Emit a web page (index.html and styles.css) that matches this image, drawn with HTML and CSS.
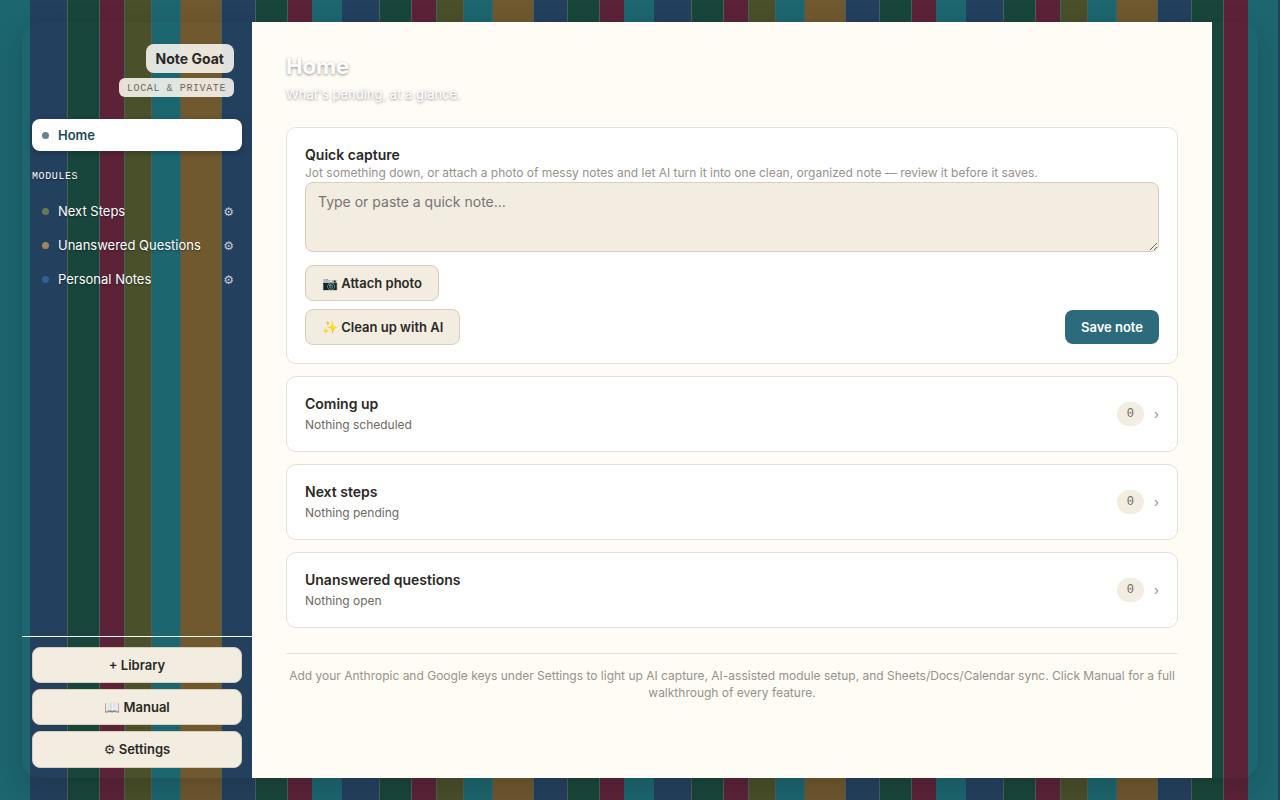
FILE: index.html
```html
<!DOCTYPE html>
<html lang="en">
<head>
<meta charset="utf-8">
<meta name="viewport" content="width=device-width, initial-scale=1">
<title>Note Goat</title>
<link rel="stylesheet" href="styles.css">
</head>
<body>
<div class="shell">
  <aside class="sidebar">
    <div class="brand">
      <span class="brand-name">Note Goat</span>
      <span class="brand-tag">LOCAL &amp; PRIVATE</span>
    </div>
    <nav class="nav">
      <a class="nav-link active" href="#home"><span class="dot"></span>Home</a>
      <h2 class="nav-heading">MODULES</h2>
      <div class="nav-row">
        <a class="nav-link" href="#next"><span class="dot dot-olive"></span>Next Steps</a>
        <button class="gear" type="button" aria-label="Configure Next Steps">⚙</button>
      </div>
      <div class="nav-row">
        <a class="nav-link" href="#questions"><span class="dot dot-tan"></span>Unanswered Questions</a>
        <button class="gear" type="button" aria-label="Configure Unanswered Questions">⚙</button>
      </div>
      <div class="nav-row">
        <a class="nav-link" href="#notes"><span class="dot dot-blue"></span>Personal Notes</a>
        <button class="gear" type="button" aria-label="Configure Personal Notes">⚙</button>
      </div>
    </nav>
    <div class="side-actions">
      <button class="btn" type="button">+ Library</button>
      <button class="btn" type="button">📖 Manual</button>
      <button class="btn" type="button"><span class="symbol">⚙</span> Settings</button>
    </div>
  </aside>
  <main class="main">
    <header class="page-head">
      <h1>Home</h1>
      <p>What's pending, at a glance.</p>
    </header>
    <section class="card">
      <label class="card-title" for="note">Quick capture</label>
      <p class="hint">Jot something down, or attach a photo of messy notes and let AI turn it into one clean, organized note — review it before it saves.</p>
      <textarea id="note" class="note" placeholder="Type or paste a quick note..."></textarea>
      <button class="btn" type="button">📷 Attach photo</button>
      <div class="actions">
        <button class="btn" type="button">✨ Clean up with AI</button>
        <button class="btn btn-primary" type="button">Save note</button>
      </div>
    </section>
    <a class="card summary" href="#coming">
      <span class="summary-text"><span class="card-title">Coming up</span><span class="status">Nothing scheduled</span></span>
      <span class="count">0</span><span class="chevron">›</span>
    </a>
    <a class="card summary" href="#next">
      <span class="summary-text"><span class="card-title">Next steps</span><span class="status">Nothing pending</span></span>
      <span class="count">0</span><span class="chevron">›</span>
    </a>
    <a class="card summary" href="#questions">
      <span class="summary-text"><span class="card-title">Unanswered questions</span><span class="status">Nothing open</span></span>
      <span class="count">0</span><span class="chevron">›</span>
    </a>
    <footer class="foot">Add your Anthropic and Google keys under Settings to light up AI capture, AI-assisted module setup, and Sheets/Docs/Calendar sync. Click Manual for a full walkthrough of every feature.</footer>
  </main>
</div>
</body>
</html>
```
FILE: styles.css
```css
:root {
  --teal: #1c6670;
  --navy: #24405f;
  --green: #19463c;
  --maroon: #5c2338;
  --olive: #49502a;
  --brown: #70582f;
  --seam: #49605c;
  --sand: #f3ece0;
  --sand-line: #d9cfb8;
  --line: #e6e2d8;
  --ink: #2a2926;
}

* { box-sizing: border-box; }

body {
  margin: 0;
  min-height: 100vh;
  padding: 22px;
  display: flex;
  font-family: Inter, "Liberation Sans", sans-serif;
  font-size: 14px;
  color: var(--ink);
  background: repeating-linear-gradient(90deg,
    var(--teal) 0 30px,
    var(--navy) 30px 67px, var(--seam) 67px 68px,
    var(--green) 68px 99px, var(--seam) 99px 100px,
    var(--maroon) 100px 124px, var(--seam) 124px 125px,
    var(--olive) 125px 151px, var(--seam) 151px 152px,
    var(--teal) 152px 180px, var(--seam) 180px 181px,
    var(--brown) 181px 221px, var(--seam) 221px 222px,
    var(--navy) 222px 255px, var(--seam) 255px 256px,
    var(--green) 256px 287px, var(--seam) 287px 288px,
    var(--maroon) 288px 312px);
}

h1, h2, p { margin: 0; }
a { color: inherit; text-decoration: none; }
button { font: inherit; cursor: pointer; }

.shell {
  flex: 1;
  display: flex;
  border-radius: 18px;
  box-shadow: 0 10px 30px rgba(20, 20, 20, .2);
}

.sidebar {
  flex: 0 0 230px;
  display: flex;
  flex-direction: column;
}

.brand {
  display: flex;
  flex-direction: column;
  align-items: flex-end;
  gap: 5px;
  padding: 22px 18px;
}

.brand-name, .brand-tag { background: rgba(255, 252, 245, .86); }

.brand-name {
  padding: 4px 10px;
  border-radius: 8px;
  font-size: 14px;
  line-height: 21px;
  font-weight: 700;
}

.brand-tag {
  padding: 4px 8px 2px;
  border-radius: 6px;
  font-family: "Liberation Mono", monospace;
  font-size: 10px;
  line-height: 13px;
  letter-spacing: .06em;
  color: #6d6a62;
}

.nav {
  flex: 1;
  display: flex;
  flex-direction: column;
  gap: 2px;
  padding: 0 10px;
}

.nav-row { display: flex; align-items: center; padding-right: 6px; }

.nav-link {
  flex: 1;
  display: flex;
  align-items: center;
  gap: 9px;
  padding: 6px 10px;
  font-size: 13px;
  line-height: 20px;
  white-space: nowrap;
  color: #fff;
  text-shadow: 0 1px 2px rgba(0, 0, 0, .45);
}

.nav-link.active {
  flex: none;
  border-radius: 8px;
  background: #fff;
  color: #1e4a5a;
  font-weight: 600;
  text-shadow: none;
  box-shadow: 0 2px 6px rgba(0, 0, 0, .25);
}

.dot { width: 7px; height: 7px; border-radius: 50%; background: #65848c; }
.dot-olive { background: #6a7a50; }
.dot-tan { background: #a08560; }
.dot-blue { background: #345f92; }

.nav-heading {
  padding: 16px 0 9px;
  font-family: "Liberation Mono", monospace;
  font-size: 10px;
  line-height: 15px;
  font-weight: 400;
  letter-spacing: .06em;
  color: #fff;
  text-shadow: 0 1px 2px rgba(0, 0, 0, .45);
}

.symbol, .gear { font-family: "DejaVu Sans", sans-serif; }

.gear {
  padding: 2px 2px 0;
  border: 0;
  background: none;
  font-size: 12px;
  line-height: 20px;
  color: #c4cbd2;
}

.side-actions {
  display: flex;
  flex-direction: column;
  gap: 6px;
  padding: 10px;
  border-top: 1px solid #fff;
}

.btn {
  padding: 8px 16px;
  border: 1px solid var(--sand-line);
  border-radius: 8px;
  background: var(--sand);
  color: var(--ink);
  font-size: 13px;
  line-height: 18px;
  font-weight: 600;
}

.main {
  flex: 0 1 960px;
  min-width: 0;
  padding: 29px 34px;
  background: #fffcf5;
}

.page-head {
  padding-bottom: 23px;
  color: #fff;
  text-shadow: 0 1px 3px rgba(0, 0, 0, .45);
}

.page-head h1 { font-size: 22px; line-height: 30px; font-weight: 700; }
.page-head p { padding-top: 4px; font-size: 13px; line-height: 19px; }

.card {
  display: block;
  margin-bottom: 12px;
  padding: 18px;
  border: 1px solid var(--line);
  border-radius: 10px;
  background: #fff;
}

.card-title { display: block; font-size: 14px; line-height: 18px; font-weight: 600; }
.hint { font-size: 12px; line-height: 18px; color: #96938b; }

.note {
  display: block;
  width: 100%;
  height: 70px;
  margin-bottom: 13px;
  padding: 10px 12px;
  border: 1px solid var(--sand-line);
  border-radius: 8px;
  background: var(--sand);
  font: inherit;
  line-height: 18px;
  resize: vertical;
}

.note::placeholder { color: #757575; }

.actions {
  display: flex;
  justify-content: space-between;
  align-items: center;
  margin-top: 8px;
}

.btn-primary { border: 0; background: #2c6b7c; color: #fff; }

.summary { display: flex; align-items: center; gap: 10px; }
.summary-text { flex: 1; }
.status { display: block; padding-top: 4px; font-size: 12px; line-height: 16px; color: #6d6a62; }

.count {
  padding: 3px 10px;
  border-radius: 12px;
  background: var(--sand);
  font-family: "Liberation Mono", monospace;
  font-size: 12px;
  line-height: 18px;
  color: #6d6a62;
}

.chevron { font-size: 13px; line-height: 18px; color: #96938b; }

.foot {
  margin-top: 25px;
  padding-top: 13px;
  border-top: 1px solid var(--line);
  font-size: 12px;
  line-height: 17px;
  text-align: center;
  color: #96938b;
}
```
